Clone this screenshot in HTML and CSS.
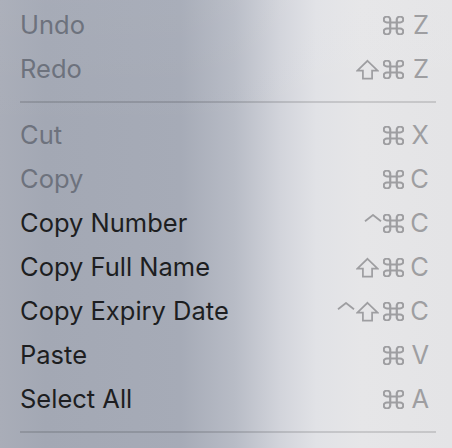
FILE: index.html
```html
<!DOCTYPE html>
<html>
<head>
<meta charset="utf-8">
<link rel="stylesheet" href="styles.css">
</head>
<body>
<svg width="0" height="0" class="defs">
  <defs>
    <symbol id="cmd" viewBox="2.4 2.4 19.2 19.2" preserveAspectRatio="none">
      <path d="M15 6v12a3 3 0 1 0 3-3H6a3 3 0 1 0 3 3V6a3 3 0 1 0-3 3h12a3 3 0 1 0-3-3" fill="none" stroke="currentColor" stroke-width="2"/>
    </symbol>
    <symbol id="shift" viewBox="0 0 24 21">
      <path d="M12 1.4 L22.6 11.6 H16.8 V20 H7.2 V11.6 H1.4 Z" fill="none" stroke="currentColor" stroke-width="1.8" stroke-linejoin="miter"/>
    </symbol>
    <symbol id="ctrl" viewBox="0 0 18 8">
      <path d="M1 7.3 L9 1 L17 7.3" fill="none" stroke="currentColor" stroke-width="1.8"/>
    </symbol>
  </defs>
</svg>
<div class="menu">
  <div class="item disabled"><span class="label">Undo</span><span class="keys"><span class="mods"><svg class="m-cmd"><use href="#cmd"/></svg></span><span class="key">Z</span></span></div>
  <div class="item disabled"><span class="label">Redo</span><span class="keys"><span class="mods"><svg class="m-shift"><use href="#shift"/></svg><svg class="m-cmd"><use href="#cmd"/></svg></span><span class="key">Z</span></span></div>
  <div class="sep"></div>
  <div class="item disabled"><span class="label">Cut</span><span class="keys"><span class="mods"><svg class="m-cmd"><use href="#cmd"/></svg></span><span class="key">X</span></span></div>
  <div class="item disabled"><span class="label">Copy</span><span class="keys"><span class="mods"><svg class="m-cmd"><use href="#cmd"/></svg></span><span class="key">C</span></span></div>
  <div class="item"><span class="label">Copy Number</span><span class="keys"><span class="mods"><svg class="m-ctrl"><use href="#ctrl"/></svg><svg class="m-cmd"><use href="#cmd"/></svg></span><span class="key">C</span></span></div>
  <div class="item"><span class="label">Copy Full Name</span><span class="keys"><span class="mods"><svg class="m-shift"><use href="#shift"/></svg><svg class="m-cmd"><use href="#cmd"/></svg></span><span class="key">C</span></span></div>
  <div class="item"><span class="label">Copy Expiry Date</span><span class="keys"><span class="mods"><svg class="m-ctrl"><use href="#ctrl"/></svg><svg class="m-shift"><use href="#shift"/></svg><svg class="m-cmd"><use href="#cmd"/></svg></span><span class="key">C</span></span></div>
  <div class="item"><span class="label">Paste</span><span class="keys"><span class="mods"><svg class="m-cmd"><use href="#cmd"/></svg></span><span class="key">V</span></span></div>
  <div class="item"><span class="label">Select All</span><span class="keys"><span class="mods"><svg class="m-cmd"><use href="#cmd"/></svg></span><span class="key">A</span></span></div>
  <div class="sep"></div>
</div>
</body>
</html>
```

FILE: styles.css
```css
html, body {
  margin: 0;
  padding: 0;
}
body {
  width: 452px;
  height: 448px;
  overflow: hidden;
  font-family: Inter, "Noto Sans", sans-serif;
  background:
    linear-gradient(180deg, rgba(255,255,255,0.04) 0%, rgba(255,255,255,0) 30%),
    linear-gradient(90deg, #a9adb8 0%, #a3a8b4 10%, #a6abb7 40%, #b8bcc6 52%, #d2d4db 62%, #e1e2e6 70%, #e6e6e8 80%, #e4e4e6 100%);
}
.defs {
  position: absolute;
  width: 0;
  height: 0;
}
.menu {
  display: flex;
  flex-direction: column;
  padding-top: 3px;
}
.item {
  height: 44px;
  display: flex;
  align-items: center;
  justify-content: space-between;
  padding: 0 23px 0 20px;
  font-size: 25.5px;
  color: #1d1e21;
}
.item.disabled .label {
  color: #6d727d;
}
.label {
  line-height: 44px;
}
.keys {
  display: flex;
  align-items: center;
  color: #9e9ea1;
}
.mods {
  display: flex;
  align-items: center;
  justify-content: flex-end;
  height: 21px;
}
.key {
  width: 25px;
  text-align: right;
  line-height: 44px;
}
.m-cmd {
  width: 21px;
  height: 19px;
}
.m-shift {
  width: 23px;
  height: 21px;
  margin-right: 4px;
}
.m-ctrl {
  width: 18px;
  height: 8px;
  margin-right: 1px;
  align-self: flex-start;
  margin-top: 1px;
}
.sep {
  height: 22px;
  display: flex;
  align-items: center;
  padding: 0 16px 0 20px;
}
.sep::before {
  content: "";
  flex: 1;
  height: 2px;
  background: rgba(0, 0, 0, 0.13);
}
```
